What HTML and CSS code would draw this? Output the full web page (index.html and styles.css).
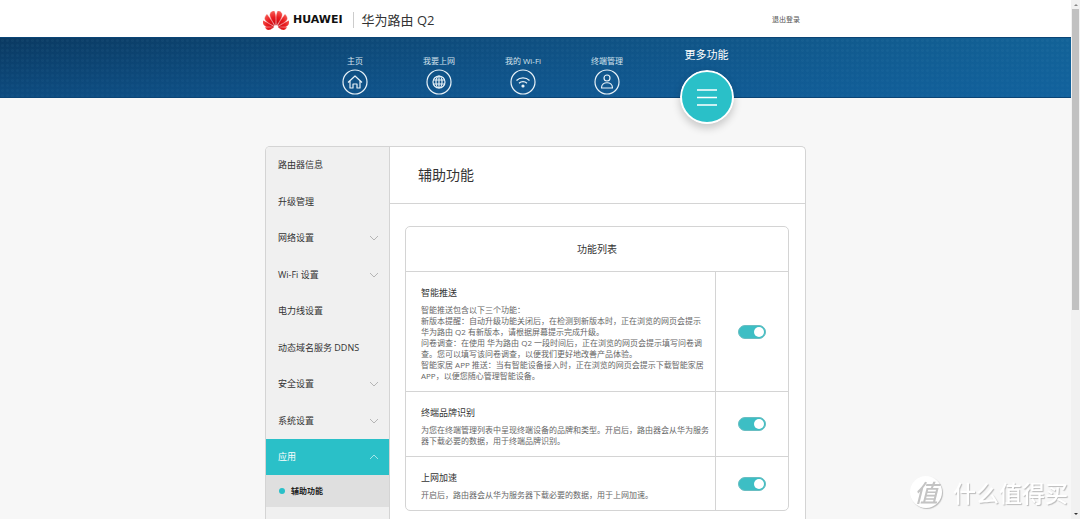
FILE: index.html
```html
<!DOCTYPE html>
<html lang="zh-CN">
<head>
<meta charset="utf-8">
<meta name="viewport" content="width=device-width, initial-scale=1">
<title>华为路由 Q2</title>
<link rel="stylesheet" href="styles.css">
</head>
<body>
<div class="window">
  <div class="page">
    <header class="header">
      <div class="container header-inner">
        <svg class="logo-mark" viewBox="0 2.9 24 18.2" preserveAspectRatio="none" aria-hidden="true">
          <defs>
            <radialGradient id="petal" gradientUnits="userSpaceOnUse" cx="12" cy="17" r="15">
              <stop offset="0" stop-color="#c4000c"/>
              <stop offset="0.55" stop-color="#ea1c20"/>
              <stop offset="1" stop-color="#f8665c"/>
            </radialGradient>
          </defs>
          <path fill="url(#petal)" stroke="url(#petal)" stroke-width="0.4" d="M3.67 6.14S1.82 7.91 1.72 9.78v.35c.08 1.51 1.22 2.4 1.22 2.4 1.83 1.79 6.26 4.04 7.3 4.55 0 0 .06.03.1-.01l.02-.04v-.04C7.52 10.8 3.67 6.14 3.67 6.14zM9.65 18.6c-.02-.08-.1-.08-.1-.08l-7.38.26c.8 1.43 2.15 2.53 3.56 2.2.96-.25 3.16-1.78 3.88-2.3.06-.05.04-.09.04-.09zm.08-.78C6.49 15.63.21 12.28.21 12.28c-.15.46-.2.9-.21 1.3v.07c0 1.07.4 1.82.4 1.82.8 1.69 2.34 2.2 2.34 2.2.7.3 1.4.31 1.4.31.12.02 4.4 0 5.54 0 .05 0 .08-.05.08-.05v-.06c0-.03-.03-.05-.03-.05zM9.06 3.19a3.42 3.42 0 00-2.57 3.15v.41c.03.6.16 1.05.16 1.05.66 2.9 3.86 7.65 4.55 8.65.05.05.1.03.1.03a.1.1 0 00.06-.1c1.06-10.6-1.11-13.42-1.11-13.42-.32.02-1.19.23-1.19.23zm8.299 2.27s-.49-1.8-2.44-2.28c0 0-.57-.14-1.17-.22 0 0-2.18 2.81-1.12 13.43.01.07.06.08.06.08.07.03.1-.03.1-.03.72-1.03 3.9-5.76 4.55-8.64 0 0 .36-1.4.02-2.34zm-2.92 13.07s-.07 0-.09.05c0 0-.01.07.03.1.7.51 2.85 2 3.88 2.3 0 0 .16.05.43.06h.14c.69-.02 1.9-.37 3-2.26l-7.4-.25zm7.83-8.41c.14-2.06-1.94-3.97-1.94-3.98 0 0-3.85 4.66-6.67 10.8 0 0-.03.08.02.13l.04.01h.06c1.06-.53 5.46-2.77 7.28-4.54 0 0 1.15-.93 1.21-2.42zm1.52 2.14s-6.28 3.37-9.52 5.55c0 0-.05.04-.03.11 0 0 .03.06.07.06 1.16 0 5.56 0 5.67-.02 0 0 .57-.02 1.27-.29 0 0 1.56-.5 2.37-2.27 0 0 .73-1.45.17-3.14z"/>
        </svg>
        <span class="logo-name">HUAWEI</span>
        <span class="product">华为路由 Q2</span>
        <a class="logout" href="#">退出登录</a>
      </div>
    </header>

    <nav class="nav">
      <div class="container nav-inner">
        <a class="nav-item" href="#">
          <span class="nav-label">主页</span>
          <svg class="nav-icon" viewBox="0 0 26 26" aria-hidden="true"><circle cx="13" cy="13" r="12"/><path d="M6 13.5 13 7l7 6.5M8 12v7h3v-4h4v4h3v-7"/></svg>
        </a>
        <a class="nav-item" href="#">
          <span class="nav-label">我要上网</span>
          <svg class="nav-icon" viewBox="0 0 26 26" aria-hidden="true"><circle cx="13" cy="13" r="12"/><circle cx="13" cy="13" r="6"/><ellipse cx="13" cy="13" rx="3" ry="6"/><path d="M13 7v12M7.500 11h11M7.500 15h11"/></svg>
        </a>
        <a class="nav-item" href="#">
          <span class="nav-label">我的 Wi-Fi</span>
          <svg class="nav-icon" viewBox="0 0 26 26" aria-hidden="true"><circle cx="13" cy="13" r="12"/><path d="M6.500 11.500a9.500 9.500 0 0 1 13 0M9 14.300a5.800 5.800 0 0 1 8 0"/><circle class="dot" cx="13" cy="17" r="1.600"/></svg>
        </a>
        <a class="nav-item" href="#">
          <span class="nav-label">终端管理</span>
          <svg class="nav-icon" viewBox="0 0 26 26" aria-hidden="true"><circle cx="13" cy="13" r="12"/><circle cx="13" cy="9" r="3"/><path d="M7.500 19c0-7 11-7 11 0z"/></svg>
        </a>
        <a class="nav-item nav-item-active" href="#" aria-current="page">
          <span class="nav-label">更多功能</span>
          <svg class="nav-icon" viewBox="0 0 54 54" aria-hidden="true"><circle cx="27" cy="27" r="26"/><path d="M17 20h20M17 27.500h20M17 35h20"/></svg>
        </a>
      </div>
    </nav>

    <div class="container panel">
      <aside class="sidebar">
        <ul class="menu">
          <li><a class="menu-link" href="#">路由器信息</a></li>
          <li><a class="menu-link" href="#">升级管理</a></li>
          <li><a class="menu-link" href="#">网络设置<svg class="chevron" viewBox="0 0 10 6" aria-hidden="true"><path d="M1 1l4 4 4-4"/></svg></a></li>
          <li><a class="menu-link" href="#">Wi-Fi 设置<svg class="chevron" viewBox="0 0 10 6" aria-hidden="true"><path d="M1 1l4 4 4-4"/></svg></a></li>
          <li><a class="menu-link" href="#">电力线设置</a></li>
          <li><a class="menu-link" href="#">动态域名服务 DDNS</a></li>
          <li><a class="menu-link" href="#">安全设置<svg class="chevron" viewBox="0 0 10 6" aria-hidden="true"><path d="M1 1l4 4 4-4"/></svg></a></li>
          <li><a class="menu-link" href="#">系统设置<svg class="chevron" viewBox="0 0 10 6" aria-hidden="true"><path d="M1 1l4 4 4-4"/></svg></a></li>
          <li><a class="menu-link menu-link-open" href="#">应用<svg class="chevron" viewBox="0 0 10 6" aria-hidden="true"><path d="M1 5l4-4 4 4"/></svg></a></li>
        </ul>
        <a class="submenu-link" href="#" aria-current="page">辅助功能</a>
      </aside>
      <main class="content">
        <h1 class="title">辅助功能</h1>
        <table class="features">
          <thead>
            <tr><th colspan="2">功能列表</th></tr>
          </thead>
          <tbody>
            <tr>
              <td class="feature">
                <label class="feature-name" for="push">智能推送</label>
                <p class="feature-text">智能推送包含以下三个功能：<br>新版本提醒：自动升级功能关闭后，在检测到新版本时，正在浏览的网页会提示<br>华为路由 Q2 有新版本，请根据屏幕提示完成升级。<br>问卷调查：在使用 华为路由 Q2 一段时间后，正在浏览的网页会提示填写问卷调<br>查。您可以填写该问卷调查，以便我们更好地改善产品体验。<br>智能家居 APP 推送：当有智能设备接入时，正在浏览的网页会提示下载智能家居<br>APP，以便您随心管理智能设备。</p>
              </td>
              <td class="control"><input class="switch" id="push" type="checkbox" checked></td>
            </tr>
            <tr>
              <td class="feature">
                <label class="feature-name" for="brand">终端品牌识别</label>
                <p class="feature-text">为您在终端管理列表中呈现终端设备的品牌和类型。开启后，路由器会从华为服务<br>器下载必要的数据，用于终端品牌识别。</p>
              </td>
              <td class="control"><input class="switch" id="brand" type="checkbox" checked></td>
            </tr>
            <tr>
              <td class="feature">
                <label class="feature-name" for="boost">上网加速</label>
                <p class="feature-text">开启后，路由器会从华为服务器下载必要的数据，用于上网加速。</p>
              </td>
              <td class="control"><input class="switch" id="boost" type="checkbox" checked></td>
            </tr>
          </tbody>
        </table>
      </main>
    </div>
  </div>
  <div class="scrollbar" aria-hidden="true">
    <svg class="scroll-arrow" viewBox="0 0 9 9"><path d="M3 6l2-2 2 2z"/></svg>
    <div class="scroll-track"><div class="scroll-thumb"></div></div>
    <svg class="scroll-arrow scroll-arrow-down" viewBox="0 0 9 9"><path d="M3 3h4L5 5z"/></svg>
  </div>
</div>
<div class="watermark"><span class="watermark-badge">值</span><span class="watermark-text">什么值得买</span></div>
</body>
</html>
```
FILE: styles.css
```css
* { box-sizing: border-box; }

body {
  margin: 0;
  background: #f7f7f7;
  color: #333;
  font: 9px/12px "Open Sans", "Noto Sans CJK SC", sans-serif;
}

a { color: inherit; text-decoration: none; }

.window {
  display: grid;
  grid-template-columns: 1fr 9px;
  height: 100vh;
  overflow: hidden;
}

.page {
  display: flex;
  flex-direction: column;
  min-height: 0;
  overflow: hidden;
}

.container {
  width: 100%;
  max-width: 541px;
  margin: 0 auto;
}

/* Header */
.header { flex: none; background: #fff; }

.header-inner {
  display: flex;
  align-items: center;
  height: 37px;
  padding-top: 3px;
}

.logo-mark { width: 26px; height: 19px; margin-left: -2px; }

.logo-name {
  margin-left: 4px;
  color: #111;
  font: bold 11px/16px "DejaVu Sans", sans-serif;
}

.product {
  margin-left: 10px;
  padding-left: 8px;
  border-left: 1px solid #ccc;
  font-size: 13px;
  line-height: 16px;
}

.logout {
  margin-left: auto;
  margin-right: 6px;
  color: #555;
  font-size: 7px;
}

/* Navigation */
.nav {
  flex: none;
  height: 61px;
  border: 1px solid #0b4576;
  border-width: 1px 0;
  color: #fff;
  background:
    linear-gradient(to bottom, transparent, rgba(18, 98, 165, 0.45)),
    radial-gradient(circle, rgba(120, 185, 215, 0.06) 1px, transparent 2px) 0 0 / 5px 5px,
    linear-gradient(to right, #0a3961, #0f4f80 50%, #126297);
}

.nav-inner { display: flex; padding-left: 48px; }

.nav-item {
  display: flex;
  flex-direction: column;
  align-items: center;
  gap: 2px;
  width: 84px;
  padding-top: 17px;
  color: #d3e2ed;
  font-size: 8px;
  white-space: nowrap;
}

.nav-icon {
  width: 26px;
  height: 26px;
  fill: none;
  stroke: #e8f2f8;
  stroke-width: 1.2;
  stroke-linejoin: round;
}

.nav-icon .dot { fill: #e8f2f8; stroke: none; }

.nav-item-active {
  gap: 6px;
  width: 115px;
  padding-top: 8px;
  color: #fff;
  font-size: 11px;
  line-height: 18px;
}

.nav-item-active .nav-icon {
  width: 54px;
  height: 54px;
  border-radius: 50%;
  fill: #2ac0c8;
  stroke: #fff;
  stroke-width: 2;
  box-shadow: 0 4px 8px rgba(0, 0, 0, 0.2);
}

.nav-item-active path { stroke-width: 1.5; }

/* Panel */
.panel {
  display: grid;
  grid-template-columns: 124px 1fr;
  flex: 1 0 auto;
  margin-top: 48px;
  border: 1px solid #d4d4d4;
  border-bottom: 0;
  border-radius: 5px 5px 0 0;
  overflow: hidden;
  background: #fff;
}

.sidebar { border-right: 1px solid #d4d4d4; background: #f0f0f0; }

.menu { margin: 0; padding: 0; list-style: none; }

.menu-link {
  display: flex;
  align-items: center;
  justify-content: space-between;
  height: 36px;
  padding: 0 10px 0 12px;
}

.menu li:nth-child(even) .menu-link { height: 37px; }

.chevron {
  width: 10px;
  height: 6px;
  fill: none;
  stroke: #b5b5b5;
}

.menu .menu-link-open { color: #fff; background: #2ac0c8; }
.menu-link-open .chevron { stroke: #a5e5e8; }

.submenu-link {
  display: flex;
  align-items: center;
  gap: 6px;
  height: 32px;
  padding-left: 13px;
  background: #dfdfdf;
  color: #222;
  font-size: 8px;
  font-weight: bold;
}

.submenu-link::before {
  content: "";
  width: 6px;
  height: 6px;
  border-radius: 50%;
  background: #2ac0c8;
}

.title {
  margin: 0;
  padding: 17px 28px 18px;
  border-bottom: 1px solid #d4d4d4;
  font-size: 14px;
  font-weight: normal;
  line-height: 21px;
}

.features {
  width: calc(100% - 31px);
  margin: 22px 16px 8px 15px;
  border: 1px solid #d4d4d4;
  border-radius: 5px;
  border-spacing: 0;
}

.features th {
  height: 44px;
  padding: 0;
  font-size: 10px;
  font-weight: normal;
}

.features td { padding: 0; border-top: 1px solid #d4d4d4; }

.features .feature { padding: 15px 0 10px 15px; }

.feature-name { display: block; line-height: 12px; }

.feature-text {
  margin: 5px 0 0;
  color: #666;
  font-size: 8px;
  line-height: 11px;
  white-space: nowrap;
}

.features .control {
  width: 73px;
  border-left: 1px solid #d4d4d4;
  text-align: center;
  vertical-align: middle;
}

.switch {
  display: block;
  width: 28px;
  height: 14px;
  margin: 0 auto;
  padding: 1px;
  appearance: none;
  border: 1px solid #69bec2;
  border-radius: 7px;
  background: #ccc;
}

.switch::before {
  content: "";
  display: block;
  width: 10px;
  height: 10px;
  border-radius: 50%;
  background: #fff;
}

.switch:checked { background: #3dbec4; }
.switch:checked::before { margin-left: auto; }

/* Scrollbar */
.scrollbar {
  display: flex;
  flex-direction: column;
  background: #f1f1f1;
}

.scroll-arrow { width: 9px; height: 9px; fill: #888; }
.scroll-arrow-down { fill: #333; }
.scroll-track { flex: 1; padding: 0 1px; }
.scroll-thumb { height: 60%; background: #c1c1c1; }

/* Watermark */
.watermark {
  position: fixed;
  right: 12px;
  bottom: 11px;
  display: flex;
  align-items: center;
  gap: 11px;
  color: #fff;
  font-family: "Noto Sans CJK SC", sans-serif;
  line-height: 32px;
}

.watermark-badge {
  width: 32px;
  height: 32px;
  border-radius: 50%;
  background: #fff;
  box-shadow: 1px 1px 1px #bbb;
  color: #c4c4c4;
  font-size: 24px;
  font-style: italic;
  font-weight: 500;
  text-align: center;
}

.watermark-text { font-size: 23px; font-weight: 500; text-shadow: 1px 1px 1px #bbb; }
```
